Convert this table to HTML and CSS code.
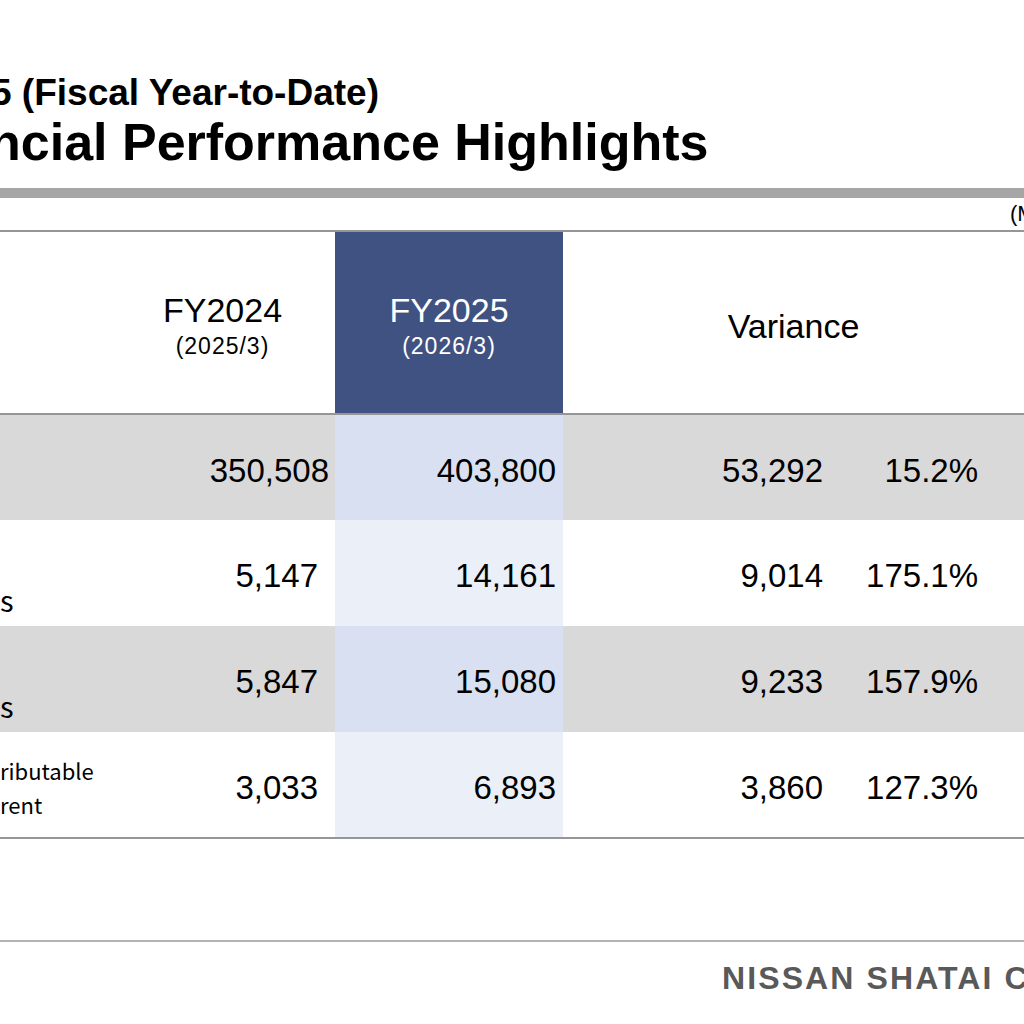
FILE: index.html
```html
<!DOCTYPE html>
<html lang="en">

  <head>
    <meta charset="UTF-8">
    <meta name="viewport" content="width=device-width, initial-scale=1.0">
    <title>Financial Performance Highlights</title>
    <link rel="stylesheet" href="styles.css">
  </head>

  <body>
    <div class="slide">
      <header class="slide-head">
        <h2 class="sub-title">5 (Fiscal Year-to-Date)</h2>
        <h1 class="title">ncial Performance Highlights</h1>
      </header>

      <div class="rule"></div>
      <div class="unit">(Millions of yen)</div>

      <table class="results">
        <colgroup>
          <col class="c-label">
          <col class="c-prev">
          <col class="c-now">
          <col class="c-var">
          <col class="c-pct">
        </colgroup>
        <thead>
          <tr>
            <th class="label"></th>
            <th class="year">
              <span class="fy">FY2024</span>
              <span class="term">(2025/3)</span>
            </th>
            <th class="year current">
              <span class="fy">FY2025</span>
              <span class="term">(2026/3)</span>
            </th>
            <th class="variance" colspan="2">Variance</th>
          </tr>
        </thead>
        <tbody>
          <tr class="shade">
            <td class="label"></td>
            <td class="num first">350,508</td>
            <td class="num now">403,800</td>
            <td class="num">53,292</td>
            <td class="num pct">15.2%</td>
          </tr>
          <tr>
            <td class="label big">s</td>
            <td class="num">5,147</td>
            <td class="num now">14,161</td>
            <td class="num">9,014</td>
            <td class="num pct">175.1%</td>
          </tr>
          <tr class="shade">
            <td class="label big">s</td>
            <td class="num">5,847</td>
            <td class="num now">15,080</td>
            <td class="num">9,233</td>
            <td class="num pct">157.9%</td>
          </tr>
          <tr>
            <td class="label small">ributable<br>rent</td>
            <td class="num">3,033</td>
            <td class="num now">6,893</td>
            <td class="num">3,860</td>
            <td class="num pct">127.3%</td>
          </tr>
        </tbody>
      </table>

      <footer class="slide-foot">
        <div class="company">NISSAN SHATAI CO., LTD.</div>
      </footer>
    </div>
  </body>

</html>
```

FILE: styles.css
```css
html,
body {
  margin: 0;
  padding: 0;
  background: #fff;
  overflow: hidden;
  --navy: #3f5282;
  --shade: #d9d9d9;
  --line: #969696;
}

.slide {
  width: 1024px;
  height: 1024px;
  overflow: hidden;
  font-family: "Liberation Sans", Arial, sans-serif;
  color: #000;
}

/* 标题 */
.slide-head {
  padding-top: 73px;
  margin-bottom: 17px;
  white-space: nowrap;
}

.sub-title {
  margin: 0;
  font-size: 37px;
  line-height: 40px;
  font-weight: bold;
  text-indent: -9px;
}

.title {
  margin: 0;
  font-size: 52px;
  line-height: 58px;
  font-weight: bold;
  text-indent: -11px;
}

.rule {
  height: 10px;
  background: #a6a6a6;
}

.unit {
  height: 32px;
  line-height: 32px;
  padding-left: 1010px;
  font-size: 22px;
  white-space: nowrap;
  overflow: hidden;
}

/* 表格 */
.results {
  width: 1024px;
  table-layout: fixed;
  border-collapse: collapse;
  border-top: 2px solid var(--line);
  border-bottom: 2px solid var(--line);
}

.c-label { width: 110px; }
.c-prev { width: 225px; }
.c-now { width: 228px; }
.c-var { width: 277px; }
.c-pct { width: 184px; }

.results th,
.results td {
  padding: 0;
}

.results thead tr {
  height: 183px;
  border-bottom: 2px solid var(--line);
}

.results th {
  font-weight: normal;
  text-align: center;
  vertical-align: middle;
}

.year {
  padding-top: 6px !important;
}

.fy {
  display: block;
  font-size: 34px;
  line-height: 40px;
}

.term {
  display: block;
  font-size: 23px;
  line-height: 32px;
  letter-spacing: 1px;
}

.current {
  background: var(--navy);
  color: #fff;
}

.variance {
  font-size: 34px;
  padding-top: 8px !important;
}

.results tbody tr {
  height: 106px;
}

.shade {
  background: var(--shade);
}

.num {
  font-size: 33px;
  text-align: right;
  vertical-align: middle;
  padding: 6px 17px 0 0 !important;
}

.num.first {
  padding-right: 6px !important;
}

.num.now {
  padding-right: 7px !important;
  background: #ebeff8;
}

.shade .num.now {
  background: #d9e0f1;
}

.num.pct {
  padding-right: 46px !important;
}

.label {
  vertical-align: top;
  white-space: nowrap;
  font-family: "Noto Sans CJK JP", "Noto Sans", sans-serif;
}

.label.big {
  font-size: 29px;
  line-height: 31px;
  padding-top: 64px !important;
}

.label.small {
  font-size: 22px;
  line-height: 34px;
  padding-top: 21px !important;
}

/* 页脚 */
.slide-foot {
  margin-top: 101px;
  border-top: 2px solid #b4b4b4;
  padding: 18px 0 0 722px;
  white-space: nowrap;
}

.company {
  font-size: 32px;
  font-weight: bold;
  letter-spacing: 2.1px;
  color: #595959;
}
```
